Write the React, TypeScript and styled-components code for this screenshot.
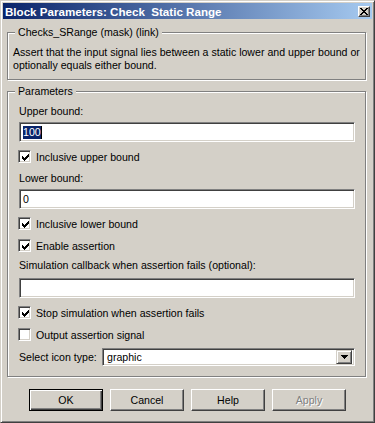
import React from "react";
import styled, { createGlobalStyle } from "styled-components";

const Global = createGlobalStyle`
  html, body { margin: 0; padding: 0; background: #d4d0c8; }
  body {
    font-family: "Liberation Sans", Arial, sans-serif;
    font-size: 10.6px;
    color: #000;
  }
`;

const Window = styled.div`
  box-sizing: border-box;
  width: 375px;
  height: 423px;
  background: #d4d0c8;
  border: 1px solid;
  border-color: #d4d0c8 #404040 #404040 #d4d0c8;
  box-shadow: inset 1px 1px #fff, inset -1px -1px #808080;
  padding: 2px;
  display: flex;
  flex-direction: column;
`;

const TitleBar = styled.div`
  height: 16px;
  flex: none;
  display: flex;
  align-items: center;
  padding-left: 2px;
  background: linear-gradient(to right, #0a246a, #a6caf0);
  color: #fff;
  font-weight: bold;
  font-size: 11.6px;
  white-space: pre;
`;

const CloseButton = styled.div`
  box-sizing: border-box;
  margin-left: auto;
  margin-right: 2px;
  width: 12px;
  height: 11px;
  background: #d4d0c8;
  border: 1px solid;
  border-color: #fff #404040 #404040 #fff;
  box-shadow: inset -1px -1px #808080;
  display: flex;
  align-items: center;
  justify-content: center;
`;

const Group = styled.div<{ $top: number }>`
  margin: ${(p) => p.$top}px 6px 0 4px;
  border: 1px solid #808080;
  box-shadow: inset 1px 1px #fff, 1px 1px #fff;
`;

const Caption = styled.div`
  width: fit-content;
  margin: -7px 0 0 7px;
  padding: 0 3px;
  height: 13px;
  line-height: 13px;
  background: #d4d0c8;
  white-space: nowrap;
`;

const GroupBody = styled.div<{ $pad: string }>`
  padding: ${(p) => p.$pad};
  display: flex;
  flex-direction: column;
`;

const Description = styled.div`
  line-height: 13px;
`;

const Label = styled.div<{ $mt: number }>`
  margin-top: ${(p) => p.$mt}px;
  height: 13px;
  line-height: 13px;
  white-space: nowrap;
`;

const Sunken = styled.div`
  box-sizing: border-box;
  background: #fff;
  border: 1px solid;
  border-color: #808080 #fff #fff #808080;
  box-shadow: inset 1px 1px #404040, inset -1px -1px #d4d0c8;
`;

const TextField = styled(Sunken)<{ $mt: number }>`
  margin-top: ${(p) => p.$mt}px;
  height: 20px;
  display: flex;
  align-items: center;
  padding-left: 3px;
  line-height: 13px;
`;

const Selected = styled.span`
  background: #0a246a;
  color: #fff;
  border-right: 1px solid #000;
`;

const CheckRow = styled.div<{ $mt: number }>`
  margin-top: ${(p) => p.$mt}px;
  margin-left: -1px;
  height: 13px;
  display: flex;
  align-items: center;
  white-space: nowrap;
`;

const CheckBox = styled(Sunken)`
  width: 13px;
  height: 13px;
  flex: none;
  margin-right: 5px;
  position: relative;
`;

const CheckMark = styled.svg`
  display: block;
  position: absolute;
  left: 2px;
  top: 2px;
`;

const SelectRow = styled.div<{ $mt: number }>`
  margin-top: ${(p) => p.$mt}px;
  height: 18px;
  display: flex;
  align-items: center;
`;

const SelectLabel = styled.div`
  width: 83px;
  flex: none;
  white-space: nowrap;
`;

const Combo = styled(Sunken)`
  flex: 1;
  height: 18px;
  display: flex;
  align-items: center;
  padding: 2px 2px 2px 4px;
`;

const ComboText = styled.div`
  flex: 1;
`;

const ComboButton = styled.div`
  box-sizing: border-box;
  width: 16px;
  height: 14px;
  background: #d4d0c8;
  border: 1px solid;
  border-color: #d4d0c8 #404040 #404040 #d4d0c8;
  box-shadow: inset 1px 1px #fff, inset -1px -1px #808080;
  display: flex;
  align-items: center;
  justify-content: center;
`;

const ButtonRow = styled.div`
  margin-top: 12px;
  display: flex;
  justify-content: center;
  gap: 7px;
`;

const Button = styled.div<{ $default?: boolean; $disabled?: boolean }>`
  box-sizing: border-box;
  width: 74px;
  height: 22px;
  display: flex;
  align-items: center;
  justify-content: center;
  background: #d4d0c8;
  border: 1px solid;
  border-color: ${(p) =>
    p.$default ? "#000" : "#fff #404040 #404040 #fff"};
  box-shadow: ${(p) =>
    p.$default
      ? "inset 1px 1px #fff, inset -1px -1px #404040, inset -2px -2px #808080"
      : "inset -1px -1px #808080"};
  color: ${(p) => (p.$disabled ? "#808080" : "#000")};
  text-shadow: ${(p) => (p.$disabled ? "1px 1px #fff" : "none")};
`;

// 7x7 classic check glyph, one 3px tall column per x
const checkCols = [2, 3, 4, 3, 2, 1, 0];
const Check = () => (
  <CheckMark width="9" height="9" viewBox="0 0 9 9" shapeRendering="crispEdges">
    {checkCols.map((y, x) => (
      <rect key={x} x={x + 1} y={y + 1} width="1" height="3" fill="#000" />
    ))}
  </CheckMark>
);

const xRows = [
  [0, 1, 6, 7],
  [1, 2, 5, 6],
  [2, 3, 4, 5],
  [3, 4],
  [2, 3, 4, 5],
  [1, 2, 5, 6],
  [0, 1, 6, 7],
];
const CloseGlyph = () => (
  <svg width="8" height="7" viewBox="0 0 8 7" shapeRendering="crispEdges">
    {xRows.flatMap((row, y) =>
      row.map((x) => <rect key={`${x}-${y}`} x={x} y={y} width="1" height="1" fill="#000" />),
    )}
  </svg>
);

const Arrow = () => (
  <svg width="7" height="4" viewBox="0 0 7 4" shapeRendering="crispEdges">
    <path d="M0 0h7v1h-1v1h-1v1h-1v1h-1v-1h-1v-1h-1v-1h-1z" fill="#000" />
  </svg>
);

const Option = ({ mt, checked, children }: { mt: number; checked: boolean; children: React.ReactNode }) => (
  <CheckRow $mt={mt}>
    <CheckBox>{checked && <Check />}</CheckBox>
    {children}
  </CheckRow>
);

export default function App() {
  return (
    <>
      <Global />
      <Window>
        <TitleBar>
          {"Block Parameters: Check  Static Range"}
          <CloseButton>
            <CloseGlyph />
          </CloseButton>
        </TitleBar>

        <Group $top={13}>
          <Caption>Checks_SRange (mask) (link)</Caption>
          <GroupBody $pad="7px 4px 7px 5px">
            <Description>
              Assert that the input signal lies between a static lower and upper bound or
              optionally equals either bound.
            </Description>
          </GroupBody>
        </Group>

        <Group $top={11}>
          <Caption>Parameters</Caption>
          <GroupBody $pad="0 10px 10px 11px">
            <Label $mt={7}>Upper bound:</Label>
            <TextField $mt={4}>
              <Selected>100</Selected>
            </TextField>
            <Option mt={8} checked>Inclusive upper bound</Option>
            <Label $mt={9}>Lower bound:</Label>
            <TextField $mt={4}>0</TextField>
            <Option mt={8} checked>Inclusive lower bound</Option>
            <Option mt={9} checked>Enable assertion</Option>
            <Label $mt={7}>Simulation callback when assertion fails (optional):</Label>
            <TextField $mt={6} />
            <Option mt={8} checked>Stop simulation when assertion fails</Option>
            <Option mt={9} checked={false}>Output assertion signal</Option>
            <SelectRow $mt={7}>
              <SelectLabel>Select icon type:</SelectLabel>
              <Combo>
                <ComboText>graphic</ComboText>
                <ComboButton>
                  <Arrow />
                </ComboButton>
              </Combo>
            </SelectRow>
          </GroupBody>
        </Group>

        <ButtonRow>
          <Button $default>OK</Button>
          <Button>Cancel</Button>
          <Button>Help</Button>
          <Button $disabled>Apply</Button>
        </ButtonRow>
      </Window>
    </>
  );
}
